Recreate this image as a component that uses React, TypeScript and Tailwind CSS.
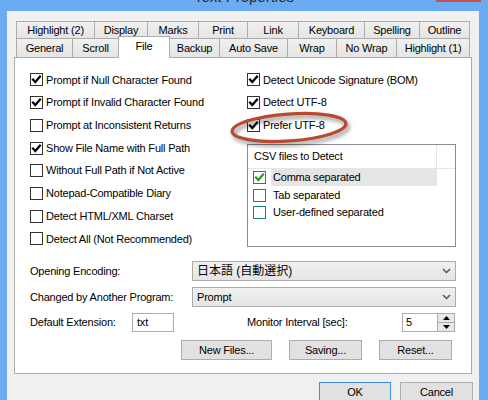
import React from "react";

const FONT = "font-['Liberation_Sans','Noto_Sans_CJK_JP',sans-serif]";

function Tick({ color = "#000" }: { color?: string }) {
  return (
    <svg width="11" height="11" viewBox="0 0 11 11">
      <path d="M2 5.5 L4.3 8 L9 2.5" stroke={color} strokeWidth="2.2" fill="none" strokeLinecap="square" />
    </svg>
  );
}

function CheckBox({ checked }: { checked: boolean }) {
  return (
    <span className="w-[13px] h-[13px] border border-[#333333] bg-white flex items-center justify-center shrink-0">
      {checked && <Tick />}
    </span>
  );
}

function CheckRow({ checked, label }: { checked: boolean; label: string }) {
  return (
    <div className="h-[22.7px] flex items-center gap-[3px]">
      <CheckBox checked={checked} />
      <span className="whitespace-nowrap">{label}</span>
    </div>
  );
}

function Tab({ label, w, first, selected }: { label: string; w: number; first?: boolean; selected?: boolean }) {
  const base = "border-l border-t border-r border-[#acacac] flex items-center justify-center whitespace-nowrap shrink-0";
  if (selected) {
    return (
      <div
        className={`${base} bg-white relative z-10 -mt-[2px] h-[22px] -ml-px pb-[3px]`}
        style={{ width: w }}
      >
        {label}
      </div>
    );
  }
  return (
    <div
      className={`${base} bg-gradient-to-b from-[#f0f0f0] to-[#e5e5e5] h-full pt-[1px] ${first ? "" : "-ml-px"}`}
      style={{ width: w }}
    >
      {label}
    </div>
  );
}

function Chevron() {
  return (
    <svg width="9" height="6" viewBox="0 0 9 6">
      <path d="M1 1 L4.5 4.5 L8 1" stroke="#555" strokeWidth="1.5" fill="none" />
    </svg>
  );
}

function Select({ children }: { children: React.ReactNode }) {
  return (
    <div className="w-[264px] h-full border border-[#acacac] bg-gradient-to-b from-[#f0f0f0] to-[#e5e5e5] flex items-center justify-between pl-[4px] pr-[4px]">
      <span className="whitespace-nowrap">{children}</span>
      <Chevron />
    </div>
  );
}

function Button({ label, w, def }: { label: string; w: number; def?: boolean }) {
  return (
    <div
      className={`h-[20px] border ${def ? "border-[#3d8ee0]" : "border-[#adadad]"} bg-[#e1e1e1] flex items-center justify-center whitespace-nowrap shrink-0`}
      style={{ width: w }}
    >
      {label}
    </div>
  );
}

function ListCheck() {
  return (
    <span className="w-[13px] h-[13px] border border-[#1f7f7f] bg-white flex items-center justify-center shrink-0">
      <Tick color="#2a9a2a" />
    </span>
  );
}

function ListEmpty() {
  return <span className="w-[13px] h-[13px] border border-[#1f7f7f] bg-white shrink-0" />;
}

export default function App() {
  const row1: [string, number][] = [
    ["Highlight (2)", 79],
    ["Display", 54],
    ["Marks", 52],
    ["Print", 50],
    ["Link", 52],
    ["Keyboard", 67],
    ["Spelling", 56],
    ["Outline", 51],
  ];
  const row2: [string, number][] = [
    ["General", 57],
    ["Scroll", 47],
    ["File", 52],
    ["Backup", 51],
    ["Auto Save", 69],
    ["Wrap", 50],
    ["No Wrap", 61],
    ["Highlight (1)", 74],
  ];

  return (
    <div className={`${FONT} text-[11px] tracking-[-0.2px] text-black w-[488px] h-[400px] bg-[#6aabf3] relative overflow-hidden flex flex-col`}>
      {/* title bar */}
      <div className="h-[11px] relative shrink-0">
        <div className="absolute left-0 right-0 top-[-11px] text-center text-[15px] leading-[15px] tracking-normal text-[#2b2b2b]">
          Text Properties
        </div>
        <div className="absolute left-[436px] top-0 w-[45px] h-[2px] bg-[#c75050]" />
      </div>

      {/* dialog body */}
      <div className="flex-1 ml-[7px] mr-[9px] bg-[#f0f0f0] pt-[10px] flex flex-col">
        {/* tabs */}
        <div className="pl-[9px]">
          <div className="flex h-[17px]">
            {row1.map(([l, w], i) => (
              <Tab key={l} label={l} w={w} first={i === 0} />
            ))}
          </div>
          <div className="flex h-[19px] items-start">
            {row2.map(([l, w], i) => (
              <Tab key={l} label={l} w={w} first={i === 0} selected={l === "File"} />
            ))}
          </div>
        </div>

        {/* panel */}
        <div className="mx-[7px] bg-white border border-[#acacac] h-[317px] pt-[10.6px] pl-[15px] flex flex-col">
          <div className="h-[192.4px] flex shrink-0">
            <div className="w-[217px] flex flex-col">
              <CheckRow checked label="Prompt if Null Character Found" />
              <CheckRow checked label="Prompt if Invalid Character Found" />
              <CheckRow checked={false} label="Prompt at Inconsistent Returns" />
              <CheckRow checked label="Show File Name with Full Path" />
              <CheckRow checked={false} label="Without Full Path if Not Active" />
              <CheckRow checked={false} label="Notepad-Compatible Diary" />
              <CheckRow checked={false} label="Detect HTML/XML Charset" />
              <CheckRow checked={false} label="Detect All (Not Recommended)" />
            </div>
            <div className="w-[209px] flex flex-col relative">
              <CheckRow checked label="Detect Unicode Signature (BOM)" />
              <CheckRow checked label="Detect UTF-8" />
              <CheckRow checked label="Prefer UTF-8" />
              <div className="mt-[7.3px] h-[103px] border border-[#8c8c8c] flex flex-col">
                <div className="h-[24px] border-b border-[#e5e5e5] flex shrink-0">
                  <div className="w-[189px] border-r border-[#e5e5e5] pl-[6px] flex items-center">
                    CSV files to Detect
                  </div>
                </div>
                <div className="h-[17.5px] flex items-center pl-[5px]">
                  <ListCheck />
                  <div className="ml-[5px] w-[166px] h-full bg-[#e5e5e5] flex items-center pl-[2px]">
                    Comma separated
                  </div>
                </div>
                <div className="h-[17.5px] flex items-center pl-[5px]">
                  <ListEmpty />
                  <div className="ml-[5px] pl-[2px]">Tab separated</div>
                </div>
                <div className="h-[17.5px] flex items-center pl-[5px]">
                  <ListEmpty />
                  <div className="ml-[5px] pl-[2px]">User-defined separated</div>
                </div>
              </div>
              {/* red annotation ellipse */}
              <svg
                className="absolute left-[-18px] top-[42px] drop-shadow-[2px_3px_2px_rgba(0,0,0,0.45)]"
                width="124"
                height="36"
                viewBox="0 0 124 36"
              >
                <ellipse
                  cx="60"
                  cy="16.5"
                  rx="57"
                  ry="13.5"
                  transform="rotate(-4 60 16.5)"
                  stroke="#b9492f"
                  strokeWidth="3.2"
                  fill="none"
                />
              </svg>
            </div>
          </div>

          {/* form rows */}
          <div className="h-[20px] flex items-center shrink-0">
            <div className="w-[162px]">Opening Encoding:</div>
            <Select>
              <span className="text-[12px] tracking-normal">日本語 (自動選択)</span>
            </Select>
          </div>
          <div className="mt-[6px] h-[20px] flex items-center shrink-0">
            <div className="w-[162px]">Changed by Another Program:</div>
            <Select>Prompt</Select>
          </div>
          <div className="mt-[6px] h-[19px] flex items-center shrink-0">
            <div className="w-[102px]">Default Extension:</div>
            <div className="w-[42px] h-full border border-[#abadb3] bg-white flex items-center pl-[4px]">txt</div>
            <div className="ml-[73px] w-[155px]">Monitor Interval [sec]:</div>
            <div className="w-[53px] h-full border border-[#abadb3] bg-white flex">
              <div className="flex-1 flex items-center pl-[3px]">5</div>
              <div className="w-[17px] flex flex-col">
                <div className="flex-1 border-l border-b border-[#acacac] bg-[#e8e8e8] flex items-center justify-center">
                  <svg width="7" height="4" viewBox="0 0 7 4"><path d="M0 4 L3.5 0 L7 4 Z" fill="#000" /></svg>
                </div>
                <div className="flex-1 border-l border-[#acacac] bg-[#e8e8e8] flex items-center justify-center">
                  <svg width="7" height="4" viewBox="0 0 7 4"><path d="M0 0 L3.5 4 L7 0 Z" fill="#000" /></svg>
                </div>
              </div>
            </div>
          </div>
          <div className="mt-[8px] h-[20px] flex items-center shrink-0">
            <div className="ml-[151px]">
              <Button label="New Files..." w={91} />
            </div>
            <div className="ml-[17px]">
              <Button label="Saving..." w={73} />
            </div>
            <div className="ml-[17px]">
              <Button label="Reset..." w={73} />
            </div>
          </div>
        </div>

        {/* OK / Cancel */}
        <div className="mt-[8px] flex justify-end pr-[6px] gap-[9px]">
          <Button label="OK" w={72} def />
          <Button label="Cancel" w={73} />
        </div>
      </div>
    </div>
  );
}
